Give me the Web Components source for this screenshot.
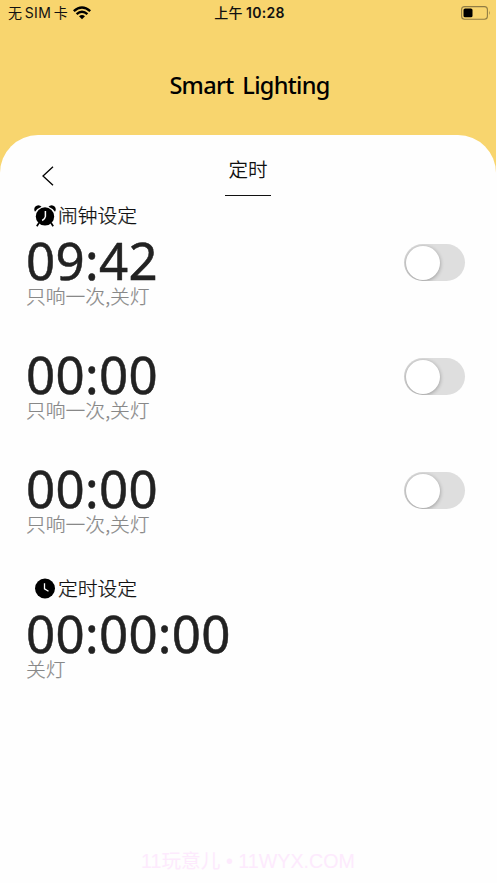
<!DOCTYPE html>
<html lang="zh-CN"><head><meta charset="utf-8"><title>Smart Lighting</title>
<style>body{margin:0;background:#fefefe}</style></head>
<body><lighting-app></lighting-app>
<script>
const define=(name,html)=>customElements.define(name,class extends HTMLElement{
  constructor(){super();this.attachShadow({mode:'open'}).innerHTML=html;}
});
define('status-bar',`<style>
:host{display:grid;grid-template-columns:1fr auto 1fr;align-items:center;height:26px;padding:0 5px 0 8px;box-sizing:border-box;font:14px/26px Inter,"Noto Sans CJK SC",sans-serif;color:#111}
.l{display:flex;align-items:center;gap:5px;white-space:nowrap}.t{font-weight:600;font-size:14px;white-space:nowrap;letter-spacing:.25px;word-spacing:-.5px}
.sim{letter-spacing:.3px;word-spacing:-1.7px}.b{justify-self:end}svg{display:block}
</style><div class="l"><span class="sim">无 SIM 卡</span><svg width="18" height="14" viewBox="0 0 18 14" fill="none" stroke="#000" stroke-width="2.5"><path d="M.8 5.1Q9-2 17.2 5.1M3.6 8.1Q9 3.4 14.4 8.1"/><path d="M6 10.2Q9 7.6 12 10.2L9 13.2Z" fill="#000" stroke="none"/></svg></div>
<span class="t"><span style="font-weight:500">上午</span> 10:28</span>
<svg class="b" width="30" height="14" viewBox="0 0 30 14"><rect x=".6" y=".6" width="25.8" height="12.6" rx="3" fill="none" stroke="#907c43" stroke-width="1.1"/><rect x="2.5" y="2.5" width="9" height="8.8" rx="1.6"/><path d="M28 4.6q1.3 2.2 0 4.4z" fill="#907c43"/></svg>`);
define('app-header',`<style>
:host{display:flex;justify-content:center;align-items:flex-start;height:109px;padding:33px 0 0 3px;box-sizing:border-box;font:500 23.5px/32px "Noto Sans","Open Sans",sans-serif;color:#000}
span{margin-top:10px;letter-spacing:-.7px;word-spacing:3.5px;white-space:nowrap}
</style><span><slot></slot></span>`);
define('panel-nav',`<style>
:host{display:grid;grid-template-columns:1fr 46px 1fr;height:62px;font:19.6px/28px "Noto Sans CJK SC",sans-serif;color:#111}
svg{margin:31px 0 0 42px}.t{text-align:center;margin-top:20px;height:40px;border-bottom:1px solid #111;white-space:nowrap;font-weight:350}
</style><svg width="12" height="20" viewBox="0 0 12 20" fill="none" stroke="#000" stroke-width="1.3"><path d="M11 .7L1 10l10 9.3"/></svg><div class="t"><slot></slot></div><i></i>`);
define('section-title',`<style>
:host{display:flex;align-items:center;gap:2px;height:37px;padding-left:34px;box-sizing:border-box;font:300 19.8px/35px "Noto Sans CJK SC",sans-serif;color:#111;-webkit-text-stroke:.25px #111}::slotted(*){flex:none}
span{height:37px}
</style><slot name="icon"></slot><span><slot></slot></span>`);
define('alarm-icon',`<style>:host{display:block;width:22px;height:22px}svg{display:block}</style>
<svg width="22" height="22" viewBox="0 0 22 22"><path d="M1 6.8C-1 3.5 1.2.5 4.3.2q2.2 0 3.2 1.5Q3.4 3.2 1 6.8ZM21 6.8C23 3.5 20.8.5 17.7.2q-2.2 0-3.2 1.5Q18.6 3.2 21 6.8Z"/><circle cx="11" cy="11.4" r="9.2"/><path d="M4.9 18L2.8 21.3M17.1 18L19.2 21.3" stroke="#000" stroke-width="1.7"/><path d="M11.4 6v5.5q-.3 2.3-3.2 4" fill="none" stroke="#fff" stroke-width="1.5"/></svg>`);
define('clock-icon',`<style>:host{display:block;width:22px;height:22px}svg{display:block}</style>
<svg width="22" height="22" viewBox="0 0 22 22"><circle cx="11" cy="10.5" r="10"/><path d="M10.5 5.2v5.7l4 2.3" fill="none" stroke="#fff" stroke-width="1.3"/></svg>`);
define('toggle-switch',`<style>
:host{display:flex;align-items:center;width:61px;height:37px;padding-left:1.5px;box-sizing:border-box;border-radius:19px;background:#dedede;overflow:hidden}
i{display:block;width:34px;height:34px;border-radius:50%;background:#fff;box-shadow:0 1px 4px #0005}
</style><i></i>`);
define('time-row',`<style>
:host{display:flex;justify-content:space-between;height:114px;padding:0 31px 0 26px;box-sizing:border-box}
.time{font:400 51px/53px "Noto Sans",sans-serif;color:#222;height:49px;letter-spacing:.3px;white-space:nowrap;-webkit-text-stroke:.5px #222}
.note{font:300 19.8px/25px "Noto Sans CJK SC",sans-serif;color:#888;-webkit-text-stroke:.2px #888;white-space:nowrap}
::slotted(toggle-switch){margin-top:10px}
</style><div><div class="time"><slot name="time"></slot></div><div class="note"><slot></slot></div></div><slot name="control"></slot>`);
define('page-footer',`<style>:host{display:block;text-align:center;font:19.7px/28px "Liberation Sans","Noto Sans CJK SC",sans-serif;color:#fdeafd;white-space:nowrap}</style><slot></slot>`);
define('lighting-app',`<style>
:host{display:flex;flex-direction:column;width:496px;height:883px;background:#f8d56e}
main{display:flex;flex-direction:column;flex:1;background:#fefefe;border-radius:38px 38px 0 0}
page-footer{margin-top:auto;margin-bottom:8px}
</style><status-bar></status-bar><app-header>Smart Lighting</app-header><main>
<panel-nav>定时</panel-nav>
<section-title><alarm-icon slot="icon"></alarm-icon>闹钟设定</section-title>
<time-row><span slot="time">09:42</span>只响一次,关灯<toggle-switch slot="control"></toggle-switch></time-row>
<time-row><span slot="time">00:00</span>只响一次,关灯<toggle-switch slot="control"></toggle-switch></time-row>
<time-row><span slot="time">00:00</span>只响一次,关灯<toggle-switch slot="control"></toggle-switch></time-row>
<section-title style="margin-top:-6px"><clock-icon slot="icon"></clock-icon>定时设定</section-title>
<time-row><span slot="time">00:00:00</span>关灯</time-row>
<page-footer>11玩意儿 • 11WYX.COM</page-footer></main>`);
</script></body></html>
